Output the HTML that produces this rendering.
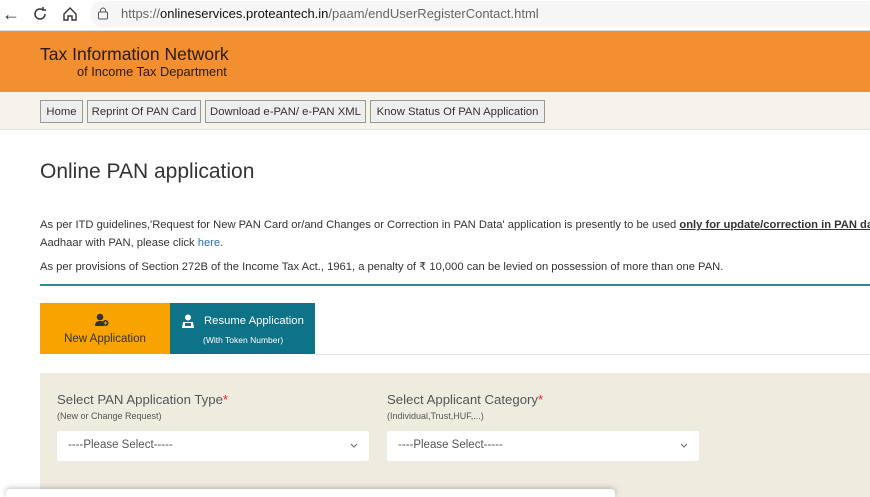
<!DOCTYPE html><html><head><style>
html,body{margin:0;width:870px;height:497px;overflow:hidden}
body{font-family:"Liberation Sans",sans-serif;background:#fff;position:relative}
.a{position:absolute}
.nav{border:1px solid #999;background:#eee;font-size:11.3px;color:#333;height:23px;line-height:22px;top:100px;box-sizing:border-box;text-align:center;white-space:nowrap}
</style></head><body>
<div class="a" style="left:0;top:0;width:870px;height:30px;background:#fff;border-bottom:1px solid #ddd"></div>
<div class="a" style="left:2px;top:4px;font-size:18px;color:#333">←</div>
<svg class="a" style="left:32px;top:6px" width="16" height="16" viewBox="0 0 16 16"><path d="M13 8a5 5 0 1 1-2-4M11 1v3h3" fill="none" stroke="#333" stroke-width="1.5"/></svg>
<svg class="a" style="left:62px;top:6px" width="16" height="16" viewBox="0 0 16 16"><path d="M2 8L8 2l6 6v6h-4v-4H6v4H2z" fill="none" stroke="#333" stroke-width="1.4"/></svg>
<div class="a" style="left:90px;top:1px;width:780px;height:26px;border-radius:13px 0 0 13px;background:#f6f6f6"></div>
<svg class="a" style="left:97px;top:7px" width="12" height="13" viewBox="0 0 12 13"><rect x="1.5" y="5" width="9" height="7" rx="1" fill="none" stroke="#555"/><path d="M3.5 5V3.5a2.5 2.5 0 0 1 5 0V5" fill="none" stroke="#555"/></svg>
<div class="a" style="left:121px;top:6px;font-size:13px;color:#666;white-space:nowrap">https://<span style="color:#111">onlineservices.proteantech.in</span>/paam/endUserRegisterContact.html</div>
<div class="a" style="left:0;top:31px;width:870px;height:61px;background:#f28f30"></div>
<div class="a" style="left:40px;top:44px;font-size:17.5px;color:#2a1a0a;white-space:nowrap">Tax Information Network</div>
<div class="a" style="left:77px;top:64px;font-size:12.8px;color:#2a1a0a;white-space:nowrap">of Income Tax Department</div>
<div class="a" style="left:0;top:92px;width:870px;height:37px;background:#f5f3ea;border-bottom:1px solid #e4e2d8"></div>
<div class="a nav" style="left:40px;width:43px">Home</div>
<div class="a nav" style="left:87px;width:114px">Reprint Of PAN Card</div>
<div class="a nav" style="left:205px;width:161px">Download e-PAN/ e-PAN XML</div>
<div class="a nav" style="left:370px;width:175px">Know Status Of PAN Application</div>
<div class="a" style="left:40px;top:160px;font-size:21px;color:#333;white-space:nowrap">Online PAN application</div>
<div class="a" style="left:40px;top:216px;font-size:11.2px;color:#333;white-space:nowrap;line-height:18px">As per ITD guidelines,'Request for New PAN Card or/and Changes or Correction in PAN Data' application is presently to be used <b><u>only for update/correction in PAN data</u></b><br>Aadhaar with PAN, please click <span style="color:#2a6fb8">here.</span></div>
<div class="a" style="left:40px;top:260px;font-size:11.2px;color:#333;white-space:nowrap">As per provisions of Section 272B of the Income Tax Act., 1961, a penalty of ₹ 10,000 can be levied on possession of more than one PAN.</div>
<div class="a" style="left:40px;top:284px;width:830px;height:2px;background:#2f8a96"></div>
<div class="a" style="left:40px;top:303px;width:130px;height:51px;background:#f8a300"></div>
<svg class="a" style="left:94px;top:313px" width="16" height="14" viewBox="0 0 16 14"><circle cx="6" cy="4" r="3.3" fill="#333"/><path d="M1 13c0-4 2-5 5-5s4 1 4 2v3z" fill="#333"/><circle cx="11.5" cy="10" r="3" fill="#333"/><path d="M11.5 8.3v3.4M9.8 10h3.4" stroke="#f8a300" stroke-width="1"/></svg>
<div class="a" style="left:40px;top:333px;width:130px;text-align:center;font-size:11.5px;color:#333">New Application</div>
<div class="a" style="left:170px;top:303px;width:145px;height:51px;background:#0e7386"></div>
<svg class="a" style="left:180px;top:314px" width="16" height="15" viewBox="0 0 16 15"><circle cx="8" cy="3.5" r="3" fill="#fff"/><path d="M2 14l1-6h10l1 6z" fill="#fff"/><rect x="5" y="9" width="6" height="3" fill="#0e7386"/></svg>
<div class="a" style="left:204px;top:315px;font-size:11.3px;color:#fff;white-space:nowrap">Resume Application</div>
<div class="a" style="left:203px;top:335px;font-size:8.5px;color:#fff;white-space:nowrap">(With Token Number)</div>
<div class="a" style="left:315px;top:354px;width:555px;height:1px;background:#e6e6e6"></div>
<div class="a" style="left:40px;top:373px;width:830px;height:124px;background:#eeecdf"></div>
<div class="a" style="left:57px;top:392px;font-size:13.2px;color:#555;white-space:nowrap">Select PAN Application Type<span style="color:#e22">*</span></div>
<div class="a" style="left:57px;top:411px;font-size:9px;color:#555">(New or Change Request)</div>
<div class="a" style="left:387px;top:392px;font-size:13.2px;color:#555;white-space:nowrap">Select Applicant Category<span style="color:#e22">*</span></div>
<div class="a" style="left:387px;top:411px;font-size:9px;color:#555">(Individual,Trust,HUF,...)</div>
<div class="a" style="left:57px;top:431px;width:312px;height:30px;background:#fff;border-radius:2px"></div>
<div class="a" style="left:68px;top:439px;font-size:11.5px;color:#555">----Please Select-----</div>
<svg class="a" style="left:350px;top:443px" width="8" height="6" viewBox="0 0 8 6"><path d="M1 1l3 3 3-3" fill="none" stroke="#666"/></svg>
<div class="a" style="left:387px;top:431px;width:312px;height:30px;background:#fff;border-radius:2px"></div>
<div class="a" style="left:398px;top:439px;font-size:11.5px;color:#555">----Please Select-----</div>
<svg class="a" style="left:680px;top:443px" width="8" height="6" viewBox="0 0 8 6"><path d="M1 1l3 3 3-3" fill="none" stroke="#666"/></svg>
<div class="a" style="left:6px;top:489px;width:609px;height:8px;background:#fff;border-radius:4px 4px 0 0;box-shadow:0 -1px 6px rgba(0,0,0,.25)"></div>
</body></html>
